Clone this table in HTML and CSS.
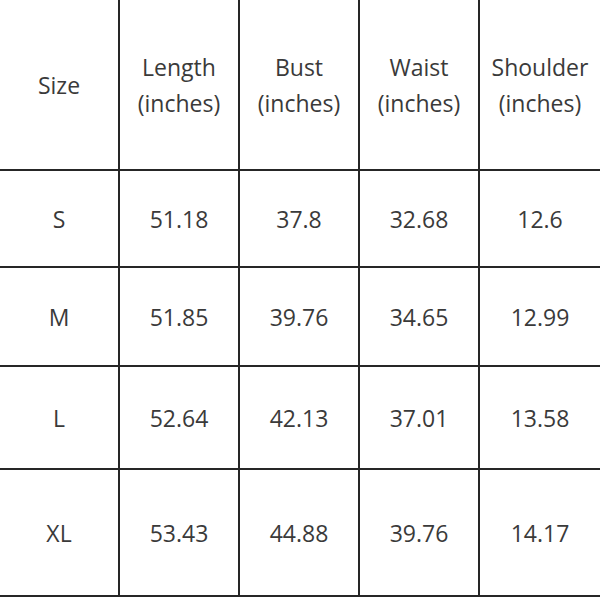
FILE: index.html
```html
<!DOCTYPE html>
<html>
<head>
<meta charset="utf-8">
<link rel="stylesheet" href="styles.css">
</head>
<body>
<div class="chart">
  <div class="cell">Size</div>
  <div class="cell">Length<br>(inches)</div>
  <div class="cell">Bust<br>(inches)</div>
  <div class="cell">Waist<br>(inches)</div>
  <div class="cell">Shoulder<br>(inches)</div>

  <div class="cell">S</div>
  <div class="cell">51.18</div>
  <div class="cell">37.8</div>
  <div class="cell">32.68</div>
  <div class="cell">12.6</div>

  <div class="cell">M</div>
  <div class="cell">51.85</div>
  <div class="cell">39.76</div>
  <div class="cell">34.65</div>
  <div class="cell">12.99</div>

  <div class="cell">L</div>
  <div class="cell">52.64</div>
  <div class="cell">42.13</div>
  <div class="cell">37.01</div>
  <div class="cell">13.58</div>

  <div class="cell">XL</div>
  <div class="cell">53.43</div>
  <div class="cell">44.88</div>
  <div class="cell">39.76</div>
  <div class="cell">14.17</div>
</div>
</body>
</html>
```
FILE: styles.css
```css
html, body {
  margin: 0;
  padding: 0;
  background: #ffffff;
}
body {
  width: 600px;
  height: 600px;
  overflow: hidden;
}
.chart {
  display: grid;
  grid-template-columns: 120px 120px 120px 120px 122px;
  grid-template-rows: 171px 97px 99px 103px 127px;
  font-family: "Open Sans", "Noto Sans", sans-serif;
  font-size: 23px;
  line-height: 36px;
  color: #3a3a3a;
}
.cell {
  box-sizing: border-box;
  border-right: 2px solid #262626;
  border-bottom: 2px solid #262626;
  display: flex;
  align-items: center;
  justify-content: center;
  text-align: center;
}
```
